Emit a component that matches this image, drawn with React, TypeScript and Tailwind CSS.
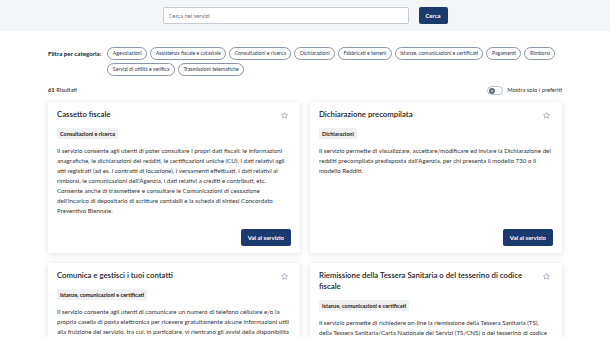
import React from 'react';
import { Star } from 'lucide-react';

const categories = [
  'Agevolazioni',
  'Assistenza fiscale e catastale',
  'Consultazioni e ricerca',
  'Dichiarazioni',
  'Fabbricati e terreni',
  'Istanze, comunicazioni e certificati',
  'Pagamenti',
  'Rimborsi',
  'Servizi di utilità e verifica',
  'Trasmissioni telematiche',
];

interface Service {
  title: string;
  tag: string;
  text: string;
}

const services: Service[] = [
  {
    title: 'Cassetto fiscale',
    tag: 'Consultazioni e ricerca',
    text: "Il servizio consente agli utenti di poter consultare i propri dati fiscali: le informazioni anagrafiche, le dichiarazioni dei redditi, le certificazioni uniche (CU), i dati relativi agli atti registrati (ad es. i contratti di locazione), i versamenti effettuati, i dati relativi ai rimborsi, le comunicazioni dell'Agenzia, i dati relativi a crediti e contributi, etc. Consente anche di trasmettere e consultare le Comunicazioni di cessazione dell'incarico di depositario di scritture contabili e la scheda di sintesi Concordato Preventivo Biennale.",
  },
  {
    title: 'Dichiarazione precompilata',
    tag: 'Dichiarazioni',
    text: "Il servizio permette di visualizzare, accettare/modificare ed inviare la Dichiarazione dei redditi precompilata predisposta dall'Agenzia, per chi presenta il modello 730 o il modello Redditi.",
  },
  {
    title: 'Comunica e gestisci i tuoi contatti',
    tag: 'Istanze, comunicazioni e certificati',
    text: "Il servizio consente agli utenti di comunicare un numero di telefono cellulare e/o la propria casella di posta elettronica per ricevere gratuitamente alcune informazioni utili alla fruizione del servizio, tra cui, in particolare, vi rientrano  gli avvisi della disponibilità della dichiarazione precompilata e delle comunicazioni inviate dall'Agenzia.",
  },
  {
    title: 'Riemissione della Tessera Sanitaria o del tesserino di codice fiscale',
    tag: 'Istanze, comunicazioni e certificati',
    text: 'Il servizio permette di richiedere on-line la riemissione della Tessera Sanitaria (TS), della Tessera Sanitaria/Carta Nazionale dei Servizi (TS/CNS) o del tesserino di codice fiscale.',
  },
];

const ServiceCard: React.FC<{ service: Service }> = ({ service }) => (
  <div className="bg-white shadow-[0_1px_6px_rgba(0,0,0,0.13)] rounded-[2px] px-[9px] pt-[7px] pb-[7px] flex flex-col">
    <div className="flex items-start justify-between gap-[8px]">
      <h3 className="text-[7.8px] leading-[11px] font-semibold text-[#1a1a1a] pr-[10px]">{service.title}</h3>
      <Star size={7} strokeWidth={1.6} className="text-[#5b6f82] mt-[3px] mr-[3px] shrink-0" />
    </div>
    <div className="mt-[8px] flex">
      <span className="bg-[#eef0f2] text-[#1a1a1a] text-[5.5px] font-bold px-[3px] py-[2.5px] leading-[6px] rounded-[1px]">
        {service.tag}
      </span>
    </div>
    <p className="mt-[7px] text-[6.2px] leading-[10px] text-[#333333]">{service.text}</p>
    <div className="mt-auto pt-[13px] flex justify-end">
      <button className="bg-[#1d3a6f] text-white text-[6px] font-bold h-[17px] px-[7px] rounded-[2px]">
        Vai al servizio
      </button>
    </div>
  </div>
);

export default function App() {
  return (
    <div className="min-h-screen bg-white font-['Lato',sans-serif] text-[#1a1a1a]">
      <div className="bg-[#f3f5f7] h-[31px] flex items-center justify-center gap-[10px]">
        <input
          className="w-[246px] h-[17px] bg-white border border-[#c5cbd2] rounded-[2px] px-[5px] text-[5.8px] placeholder:text-[#6b7280] outline-none"
          placeholder="Cerca nei servizi"
        />
        <button className="w-[29px] h-[17px] bg-[#1d3a6f] text-white text-[6px] font-bold rounded-[2px]">
          Cerca
        </button>
      </div>

      <div className="w-[514px] mx-auto">
        <div className="flex items-start gap-[6px] mt-[16px]">
          <span className="text-[6.2px] font-bold whitespace-nowrap h-[13px] flex items-center">Filtra per categoria:</span>
          <div className="flex flex-wrap gap-x-[3px] gap-y-[3px] flex-1">
            {categories.map((c) => (
              <span
                key={c}
                className="h-[13px] flex items-center px-[4.5px] border border-[#8a97a8] rounded-full text-[5.2px] text-[#2b3a55] whitespace-nowrap"
              >
                {c}
              </span>
            ))}
          </div>
        </div>

        <div className="flex items-center justify-between mt-[9px] h-[11px]">
          <span className="text-[5.8px]">
            <b>61</b> Risultati
          </span>
          <div className="flex items-center gap-[4px]">
            <div className="w-[16px] h-[9px] rounded-full border border-[#b8c0c9] bg-white flex items-center pl-[1px]">
              <div className="w-[6px] h-[6px] rounded-full bg-[#5f6b77] flex items-center justify-center">
                <div className="w-[2px] h-[2px] rounded-full bg-[#c8ced4]" />
              </div>
            </div>
            <span className="text-[5.8px] text-[#333333]">Mostra solo i preferiti</span>
          </div>
        </div>

        <div className="grid grid-cols-2 gap-x-[10px] gap-y-[10px] mt-[6px] pb-[20px]">
          {services.map((s) => (
            <ServiceCard key={s.title} service={s} />
          ))}
        </div>
      </div>
    </div>
  );
}
